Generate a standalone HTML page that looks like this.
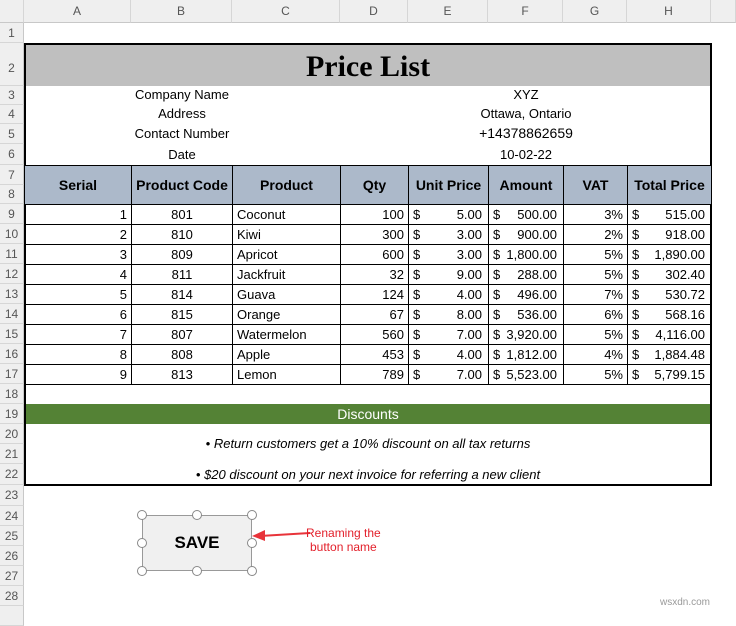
<!DOCTYPE html>
<html><head><meta charset="utf-8"><style>
*{margin:0;padding:0;box-sizing:border-box}
body{width:736px;height:611px;background:#fff;position:relative;overflow:hidden;font-family:"Liberation Sans",sans-serif;font-size:13px;color:#000}
.a{position:absolute}
.ch{position:absolute;top:0;height:23px;background:#efefef;border-right:1px solid #d6d6d6;border-bottom:1px solid #c8c8c8;color:#555;font-size:12px;text-align:center;line-height:23px}
.rh{position:absolute;left:0;width:24px;background:#efefef;border-bottom:1px solid #d6d6d6;border-right:1px solid #c8c8c8;color:#555;font-size:12px;text-align:center}
table{position:absolute;left:24px;top:165px;border-collapse:collapse;table-layout:fixed;width:687px}
td{border:1px solid #000;height:20px;padding:0 4px 0 4px;white-space:nowrap;font-size:13px}
td.r{padding-right:4px}
th{border:1px solid #000;height:39px;background:#acb9ca;font-size:14px;font-weight:bold}
.r{text-align:right}.c{text-align:center}
.m{display:flex;justify-content:space-between;padding-right:2px}
.info{position:absolute;text-align:center;width:200px;font-size:13px}
.h{position:absolute;width:10px;height:10px;border:1.5px solid #888;border-radius:50%;background:#fff}
</style></head><body>
<div class="ch" style="left:0;width:24px"></div>
<div class="ch" style="left:24px;width:107px">A</div>
<div class="ch" style="left:131px;width:101px">B</div>
<div class="ch" style="left:232px;width:108px">C</div>
<div class="ch" style="left:340px;width:68px">D</div>
<div class="ch" style="left:408px;width:80px">E</div>
<div class="ch" style="left:488px;width:75px">F</div>
<div class="ch" style="left:563px;width:64px">G</div>
<div class="ch" style="left:627px;width:84px">H</div>
<div class="ch" style="left:711px;width:25px"></div>

<div class="rh" style="top:23px;height:20px;line-height:20px">1</div>
<div class="rh" style="top:43px;height:43px;line-height:50px">2</div>
<div class="rh" style="top:86px;height:19px;line-height:19px">3</div>
<div class="rh" style="top:105px;height:19px;line-height:19px">4</div>
<div class="rh" style="top:124px;height:20px;line-height:20px">5</div>
<div class="rh" style="top:144px;height:21px;line-height:21px">6</div>
<div class="rh" style="top:165px;height:20px;line-height:20px">7</div>
<div class="rh" style="top:185px;height:19px;line-height:19px">8</div>
<div class="rh" style="top:204px;height:20px;line-height:20px">9</div>
<div class="rh" style="top:224px;height:20px;line-height:20px">10</div>
<div class="rh" style="top:244px;height:20px;line-height:20px">11</div>
<div class="rh" style="top:264px;height:20px;line-height:20px">12</div>
<div class="rh" style="top:284px;height:20px;line-height:20px">13</div>
<div class="rh" style="top:304px;height:20px;line-height:20px">14</div>
<div class="rh" style="top:324px;height:20px;line-height:20px">15</div>
<div class="rh" style="top:344px;height:20px;line-height:20px">16</div>
<div class="rh" style="top:364px;height:20px;line-height:20px">17</div>
<div class="rh" style="top:384px;height:20px;line-height:20px">18</div>
<div class="rh" style="top:404px;height:20px;line-height:20px">19</div>
<div class="rh" style="top:424px;height:20px;line-height:20px">20</div>
<div class="rh" style="top:444px;height:20px;line-height:20px">21</div>
<div class="rh" style="top:464px;height:21px;line-height:21px">22</div>
<div class="rh" style="top:485px;height:21px;line-height:21px">23</div>
<div class="rh" style="top:506px;height:20px;line-height:20px">24</div>
<div class="rh" style="top:526px;height:20px;line-height:20px">25</div>
<div class="rh" style="top:546px;height:20px;line-height:20px">26</div>
<div class="rh" style="top:566px;height:20px;line-height:20px">27</div>
<div class="rh" style="top:586px;height:20px;line-height:20px">28</div>
<div class="rh" style="top:606px;height:20px"></div>

<div class="a" style="left:24px;top:43px;width:688px;height:443px;border:2px solid #000"></div>
<div class="a" style="left:26px;top:45px;width:684px;height:41px;background:#bfbfbf;text-align:center;font-family:'Liberation Serif',serif;font-weight:bold;font-size:30px;line-height:44px">Price List</div>

<div class="info" style="left:82px;top:87px">Company Name</div>
<div class="info" style="left:82px;top:106px">Address</div>
<div class="info" style="left:82px;top:126px">Contact Number</div>
<div class="info" style="left:82px;top:147px">Date</div>
<div class="info" style="left:426px;top:87px">XYZ</div>
<div class="info" style="left:426px;top:106px">Ottawa, Ontario</div>
<div class="info" style="left:426px;top:125px;font-size:14px">+14378862659</div>
<div class="info" style="left:426px;top:147px">10-02-22</div>

<table>
<colgroup><col style="width:107px"><col style="width:101px"><col style="width:108px"><col style="width:68px"><col style="width:80px"><col style="width:75px"><col style="width:64px"><col style="width:84px"></colgroup>
<tr><th>Serial</th><th>Product Code</th><th>Product</th><th>Qty</th><th>Unit Price</th><th>Amount</th><th>VAT</th><th>Total Price</th></tr>
<tr><td class="r">1</td><td class="c">801</td><td>Coconut</td><td class="r">100</td><td><div class="m"><span>$</span><span>5.00</span></div></td><td><div class="m"><span>$</span><span>500.00</span></div></td><td class="r">3%</td><td><div class="m"><span>$</span><span>515.00</span></div></td></tr>
<tr><td class="r">2</td><td class="c">810</td><td>Kiwi</td><td class="r">300</td><td><div class="m"><span>$</span><span>3.00</span></div></td><td><div class="m"><span>$</span><span>900.00</span></div></td><td class="r">2%</td><td><div class="m"><span>$</span><span>918.00</span></div></td></tr>
<tr><td class="r">3</td><td class="c">809</td><td>Apricot</td><td class="r">600</td><td><div class="m"><span>$</span><span>3.00</span></div></td><td><div class="m"><span>$</span><span>1,800.00</span></div></td><td class="r">5%</td><td><div class="m"><span>$</span><span>1,890.00</span></div></td></tr>
<tr><td class="r">4</td><td class="c">811</td><td>Jackfruit</td><td class="r">32</td><td><div class="m"><span>$</span><span>9.00</span></div></td><td><div class="m"><span>$</span><span>288.00</span></div></td><td class="r">5%</td><td><div class="m"><span>$</span><span>302.40</span></div></td></tr>
<tr><td class="r">5</td><td class="c">814</td><td>Guava</td><td class="r">124</td><td><div class="m"><span>$</span><span>4.00</span></div></td><td><div class="m"><span>$</span><span>496.00</span></div></td><td class="r">7%</td><td><div class="m"><span>$</span><span>530.72</span></div></td></tr>
<tr><td class="r">6</td><td class="c">815</td><td>Orange</td><td class="r">67</td><td><div class="m"><span>$</span><span>8.00</span></div></td><td><div class="m"><span>$</span><span>536.00</span></div></td><td class="r">6%</td><td><div class="m"><span>$</span><span>568.16</span></div></td></tr>
<tr><td class="r">7</td><td class="c">807</td><td>Watermelon</td><td class="r">560</td><td><div class="m"><span>$</span><span>7.00</span></div></td><td><div class="m"><span>$</span><span>3,920.00</span></div></td><td class="r">5%</td><td><div class="m"><span>$</span><span>4,116.00</span></div></td></tr>
<tr><td class="r">8</td><td class="c">808</td><td>Apple</td><td class="r">453</td><td><div class="m"><span>$</span><span>4.00</span></div></td><td><div class="m"><span>$</span><span>1,812.00</span></div></td><td class="r">4%</td><td><div class="m"><span>$</span><span>1,884.48</span></div></td></tr>
<tr><td class="r">9</td><td class="c">813</td><td>Lemon</td><td class="r">789</td><td><div class="m"><span>$</span><span>7.00</span></div></td><td><div class="m"><span>$</span><span>5,523.00</span></div></td><td class="r">5%</td><td><div class="m"><span>$</span><span>5,799.15</span></div></td></tr>
</table>

<div class="a" style="left:26px;top:404px;width:684px;height:20px;background:#548235;color:#fff;text-align:center;font-size:14px;line-height:20px">Discounts</div>
<div class="a" style="left:26px;top:436px;width:684px;text-align:center;font-style:italic;font-size:13px">• Return customers get a 10% discount on all tax returns</div>
<div class="a" style="left:26px;top:467px;width:684px;text-align:center;font-style:italic;font-size:13px">• $20 discount on your next invoice for referring a new client</div>

<div class="a" style="left:142px;top:515px;width:110px;height:56px;background:#f0f0f0;border:1.5px solid #999;text-align:center;line-height:54px;font-weight:bold;font-size:17px">SAVE</div>
<div class="h" style="left:137px;top:510px"></div><div class="h" style="left:192px;top:510px"></div><div class="h" style="left:247px;top:510px"></div>
<div class="h" style="left:137px;top:538px"></div><div class="h" style="left:247px;top:538px"></div>
<div class="h" style="left:137px;top:566px"></div><div class="h" style="left:192px;top:566px"></div><div class="h" style="left:247px;top:566px"></div>
<svg class="a" style="left:250px;top:525px" width="62" height="20"><line x1="10" y1="11" x2="60" y2="8" stroke="#e8333a" stroke-width="2"/><polygon points="2,11 15,5 15,16" fill="#e8333a"/></svg>
<div class="a" style="left:306px;top:526px;color:#e3202b;font-size:12px;text-align:center;line-height:14px">Renaming the<br>button name</div>
<div class="a" style="left:660px;top:597px;color:#999;font-size:10px">wsxdn.com</div>
</body></html>
